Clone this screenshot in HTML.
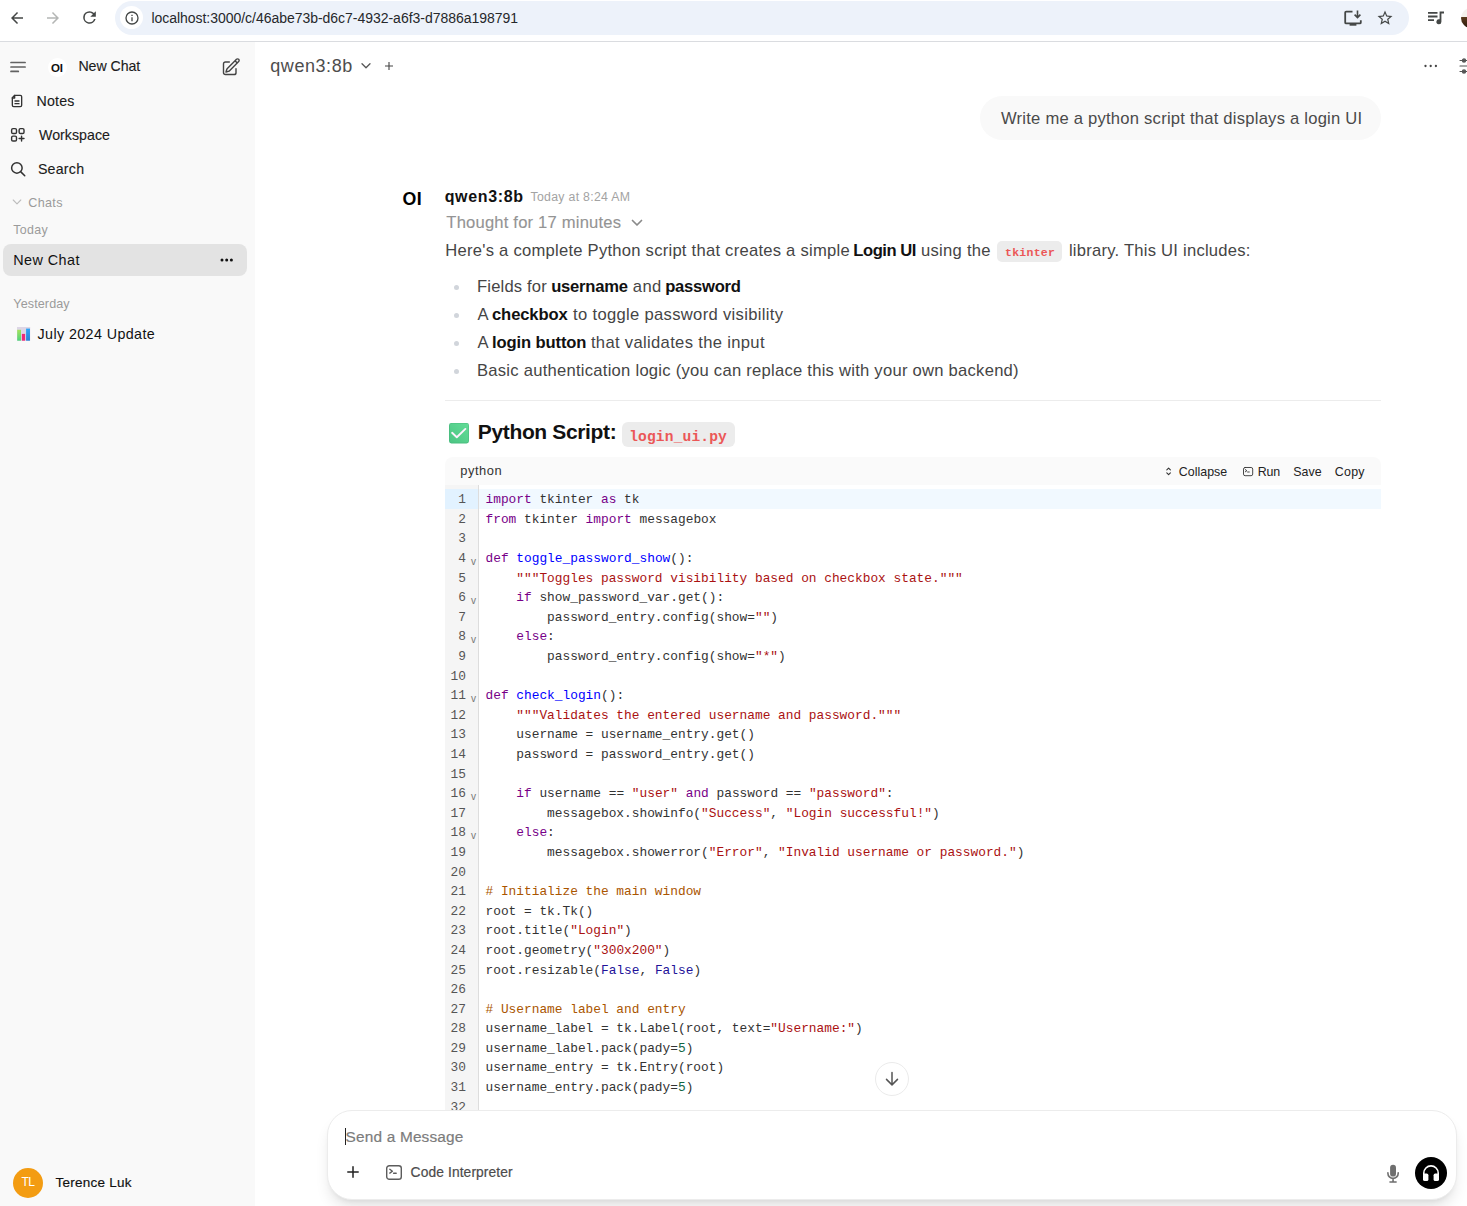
<!DOCTYPE html>
<html lang="en">
<head>
<meta charset="utf-8">
<title>New Chat | Open WebUI</title>
<style>
*{box-sizing:border-box;margin:0;padding:0}
html,body{width:1467px;height:1206px;overflow:hidden;background:#fff}
body{font-family:"Liberation Sans",sans-serif;color:#1f1f1f;position:relative;font-size:14px}
.abs{position:absolute;white-space:nowrap}
svg{position:absolute;overflow:visible}
/* browser chrome */
#chrome{position:absolute;left:0;top:0;width:1467px;height:42px;background:#fff;border-bottom:1px solid #dadce0}
#omni{position:absolute;left:115px;top:1px;width:1294px;height:34px;border-radius:17px;background:#edf2fa}
#omni .info{position:absolute;left:5px;top:5px;width:23px;height:23px;border-radius:50%;background:#fff}
#url{left:152px;top:9px;font-size:14px;color:#1f1f1f;line-height:18px}
/* sidebar */
#side{position:absolute;left:0;top:42px;width:255px;height:1164px;background:#f9f9f9}
.nav{font-size:14px;color:#171717;line-height:18px;-webkit-text-stroke:.18px #171717}
.muted{font-size:12px;color:#9b9b9b;line-height:16px}
#sel{position:absolute;left:3px;top:244px;width:244px;height:32px;border-radius:9px;background:#e3e3e3}
/* main */
#main{position:absolute;left:255px;top:42px;width:1212px;height:1164px;background:#fff;overflow:hidden}
.t16{font-size:16px;line-height:20px;color:#333}
b{font-weight:700;color:#111}
.ic{display:inline-block;font-family:"Liberation Mono",monospace;font-weight:700;color:#eb5757;background:#ececec;border-radius:5px}
/* code */
#cb{position:absolute;left:445px;top:457px;width:936px;height:760px;background:#fff}
#cbh{position:absolute;left:0;top:0;width:936px;height:28px;background:#fafafa;border-radius:8px 8px 0 0}
#gut{position:absolute;left:0;top:28px;width:34px;height:730px;background:#f5f5f5;border-right:1px solid #ddd}
#act{position:absolute;left:34px;top:32px;width:902px;height:19.6px;background:#f1f9ff}
#actg{position:absolute;left:0;top:32px;width:33px;height:19.6px;background:#e2f2ff}
pre{position:absolute;font-family:"Liberation Mono",monospace;font-size:12.83px;line-height:19.6px;color:#333;white-space:pre}
#ln{left:0;top:33.25px;width:21px;text-align:right;color:#555}
#code{left:40.5px;top:33.25px}
.k{color:#708}.d{color:#00f}.s{color:#a11}.c{color:#a50}.a{color:#219}.n{color:#164}
.fold{position:absolute;left:26px;font-family:"Liberation Sans",sans-serif;font-size:10px;color:#777;line-height:10px}
.hb{font-size:12px;color:#222;line-height:16px}
.dot{position:absolute;left:453.9px;width:5.2px;height:5.2px;border-radius:50%;background:#d1d5db}
/* input */
#inp{position:absolute;left:327px;top:1110px;width:1130px;height:90px;border-radius:25px;background:#fff;border:1px solid #ececec;box-shadow:0 10px 15px -3px rgba(0,0,0,.11),0 4px 6px -4px rgba(0,0,0,.1)}
#fadeb{position:absolute;left:255px;top:1110px;width:1212px;height:96px;background:#fff}
</style>
</head>
<body>
<div id="side">
<svg style="left:0;top:0" width="40" height="40" viewBox="0 0 40 40" fill="none" stroke="#626262" stroke-width="1.700" stroke-linecap="round"><path d="M11 20.500h14.100M11 25h14.100M11 29.400h7.300"/></svg>
<div style="position:absolute;left:47.5px;top:15.5px;width:19px;height:19px;border-radius:50%;background:#fff"></div>
<svg style="left:221px;top:14.7px" width="20" height="20" viewBox="0 0 24 24" fill="none" stroke="#444" stroke-width="1.7" stroke-linecap="round" stroke-linejoin="round"><path d="M16.862 4.487l1.687-1.688a1.875 1.875 0 112.652 2.652L10.582 16.07a4.5 4.5 0 01-1.897 1.13L6 18l.8-2.685a4.5 4.5 0 011.13-1.897l8.932-8.931zm0 0L19.5 7.125M18 14v4.75A2.25 2.25 0 0115.75 21H5.25A2.25 2.25 0 013 18.750V8.250A2.250 2.250 0 015.250 6H10"/></svg>
<svg style="left:9px;top:51px" width="16" height="16" viewBox="0 0 24 24" fill="none" stroke="#333" stroke-width="2" stroke-linecap="round" stroke-linejoin="round"><path d="M8.5 3.5H17a2 2 0 0 1 2 2v13a2 2 0 0 1-2 2H7a2 2 0 0 1-2-2V7z"/><path d="M5 7.5h3.5v-4"/><path d="M9 12h6M9 16h6"/></svg>
<svg style="left:9px;top:84px" width="18" height="18" viewBox="0 0 24 24" fill="none" stroke="#333" stroke-width="1.9" stroke-linecap="round" stroke-linejoin="round"><rect x="3.5" y="3.5" width="6.5" height="6.5" rx="1.8"/><rect x="13.5" y="3.5" width="6.5" height="6.5" rx="1.8"/><rect x="3.5" y="13.5" width="6.5" height="6.5" rx="1.8"/><path d="M16.75 13.5v6.5M13.5 16.75h6.500"/></svg>
<svg style="left:9px;top:118px" width="18" height="18" viewBox="0 0 24 24" fill="none" stroke="#333" stroke-width="2" stroke-linecap="round"><circle cx="10.500" cy="10.500" r="7"/><path d="M15.800 15.800L21 21"/></svg>
<svg style="left:12px;top:155px" width="10" height="10" viewBox="0 0 10 10" fill="none" stroke="#bdbdbd" stroke-width="1.100" stroke-linecap="round" stroke-linejoin="round"><path d="M1.200 3l3.800 3.800L8.800 3"/></svg>
<div id="selx" style="position:absolute;left:3px;top:202px;width:244px;height:32px;border-radius:8px;background:#e3e3e3"></div>
<svg style="left:220px;top:216px" width="14" height="4" viewBox="0 0 14 4"><circle cx="2" cy="2" r="1.500" fill="#111"/><circle cx="6.700" cy="2" r="1.500" fill="#111"/><circle cx="11.400" cy="2" r="1.500" fill="#111"/></svg>
<svg style="left:17px;top:285.2px" width="13.200" height="13.700" viewBox="0 0 13.200 13.700"><defs><linearGradient id="g2" x1="0" y1="0" x2="0" y2="1"><stop offset="0" stop-color="#a6e45c"/><stop offset="1" stop-color="#4fd47a"/></linearGradient><linearGradient id="g3" x1="0" y1="0" x2="0" y2="1"><stop offset="0" stop-color="#2ea6f8"/><stop offset="1" stop-color="#2b7fd6"/></linearGradient></defs><rect x="0" y="0" width="13.200" height="13.700" fill="#ddd6e6"/><rect x=".2" y="2.800" width="3.800" height="10.900" fill="url(#g2)"/><rect x="4.900" y="6.900" width="3.200" height="6.800" fill="#ee2a78"/><rect x="9.100" y="1.600" width="3.900" height="12.100" fill="url(#g3)"/></svg>
<div style="position:absolute;left:13px;top:1126px;width:30px;height:30px;border-radius:50%;background:#f39c12"></div>
</div>
<div id="main">
<svg style="left:106px;top:20px" width="10" height="8" viewBox="0 0 10 8" fill="none" stroke="#555" stroke-width="1.300" stroke-linecap="round" stroke-linejoin="round"><path d="M1 1.800l4 4 4-4"/></svg>
<svg style="left:130px;top:20px" width="8" height="8" viewBox="0 0 8 8" fill="none" stroke="#444" stroke-width="1.100"><path d="M4 0v8M0 4h8"/></svg>
<svg style="left:1169px;top:22px" width="14" height="4" viewBox="0 0 14 4"><circle cx="1.500" cy="2" r="1.150" fill="#444"/><circle cx="6.700" cy="2" r="1.150" fill="#444"/><circle cx="11.900" cy="2" r="1.150" fill="#444"/></svg>
<svg style="left:1204px;top:16px" width="16" height="16" viewBox="0 0 16 16" fill="none" stroke="#555" stroke-width="1.200" stroke-linecap="round"><path d="M1 2.500h2M7 2.500h8M1 8h8M13 8h2M1 13.500h2M7 13.500h8"/><circle cx="5" cy="2.500" r="1.600" fill="#555"/><circle cx="11" cy="8" r="1.600" fill="#555"/><circle cx="5" cy="13.500" r="1.600" fill="#555"/></svg>
</div>
<div style="position:absolute;left:980px;top:96px;width:401px;height:44px;border-radius:22px;background:#f9f9f9"></div>
<svg style="left:631px;top:218px" width="12" height="10" viewBox="0 0 12 10" fill="none" stroke="#8a8a8a" stroke-width="1.700" stroke-linecap="round" stroke-linejoin="round"><path d="M1.500 2.500l4.500 4.500 4.500-4.500"/></svg>
<div style="position:absolute;left:997.2px;top:241px;width:64.7px;height:20.5px;border-radius:5px;background:#ececec"></div>
<div class="dot" style="top:284.9px"></div><div class="dot" style="top:312.9px"></div><div class="dot" style="top:340.9px"></div><div class="dot" style="top:368.9px"></div><div style="position:absolute;left:445px;top:400px;width:936px;height:1px;background:#ececec"></div>
<svg style="left:449px;top:422.8px" width="20" height="20.400" viewBox="0 0 20 20.400"><defs><linearGradient id="g1" x1="0" y1="1" x2="1" y2="0"><stop offset="0" stop-color="#4cc583"/><stop offset="1" stop-color="#62dc97"/></linearGradient></defs><rect x="0" y="0" width="20" height="20.400" rx="2.400" fill="#49bd7f"/><rect x=".9" y=".6" width="18.500" height="18.900" rx="1.900" fill="url(#g1)"/><path d="M3.100 9.800l4.700 4.500 8.600-8.400" fill="none" stroke="#fdf2fd" stroke-width="1.900" stroke-linecap="round" stroke-linejoin="round"/></svg>
<div style="position:absolute;left:622px;top:422.4px;width:112.5px;height:24.9px;border-radius:6px;background:#ececec"></div>
<div id="cb">
<div id="cbh"></div>
<div id="gut"></div>
<div id="act"></div><div id="actg"></div>
<svg style="left:721.4px;top:10.2px" width="5.200" height="8.700" viewBox="0 0 5.200 8.700" fill="none" stroke="#333" stroke-width="1.100" stroke-linecap="round" stroke-linejoin="round"><path d="M.8 2.900L2.600 1.100l1.800 1.800M.8 5.800l1.800 1.800 1.800-1.800"/></svg>
<svg style="left:798px;top:10.200px" width="10.200" height="9.200" viewBox="0 0 10.200 9.200" fill="none" stroke="#333" stroke-width=".9" stroke-linecap="round" stroke-linejoin="round"><rect x=".5" y=".5" width="9.200" height="8.200" rx="1.600"/><path d="M2.300 2.600l1.600 1.100-1.600 1.100M4.600 5h1.700"/></svg>
<pre id="ln">1
2
3
4
5
6
7
8
9
10
11
12
13
14
15
16
17
18
19
20
21
22
23
24
25
26
27
28
29
30
31
32</pre>
<div class="fold" style="top:99.5px">v</div><div class="fold" style="top:138.7px">v</div><div class="fold" style="top:177.9px">v</div><div class="fold" style="top:236.7px">v</div><div class="fold" style="top:334.7px">v</div><div class="fold" style="top:373.9px">v</div>
<pre id="code"><span class="k">import</span> tkinter <span class="k">as</span> tk
<span class="k">from</span> tkinter <span class="k">import</span> messagebox

<span class="k">def</span> <span class="d">toggle_password_show</span>():
    <span class="s">"""Toggles password visibility based on checkbox state."""</span>
    <span class="k">if</span> show_password_var.get():
        password_entry.config(show=<span class="s">""</span>)
    <span class="k">else</span>:
        password_entry.config(show=<span class="s">"*"</span>)

<span class="k">def</span> <span class="d">check_login</span>():
    <span class="s">"""Validates the entered username and password."""</span>
    username = username_entry.get()
    password = password_entry.get()

    <span class="k">if</span> username == <span class="s">"user"</span> <span class="k">and</span> password == <span class="s">"password"</span>:
        messagebox.showinfo(<span class="s">"Success"</span>, <span class="s">"Login successful!"</span>)
    <span class="k">else</span>:
        messagebox.showerror(<span class="s">"Error"</span>, <span class="s">"Invalid username or password."</span>)

<span class="c"># Initialize the main window</span>
root = tk.Tk()
root.title(<span class="s">"Login"</span>)
root.geometry(<span class="s">"300x200"</span>)
root.resizable(<span class="a">False</span>, <span class="a">False</span>)

<span class="c"># Username label and entry</span>
username_label = tk.Label(root, text=<span class="s">"Username:"</span>)
username_label.pack(pady=<span class="n">5</span>)
username_entry = tk.Entry(root)
username_entry.pack(pady=<span class="n">5</span>)
</pre>
</div>
<div style="position:absolute;left:875px;top:1062px;width:34px;height:34px;border-radius:50%;background:#fff;border:1px solid #ebebeb"></div>
<svg style="left:882px;top:1069px" width="20" height="20" viewBox="0 0 20 20" fill="none" stroke="#555" stroke-width="1.500" stroke-linecap="round" stroke-linejoin="round"><path d="M10 3.600v12.200M4.500 10.400l5.500 5.500 5.500-5.500"/></svg>
<div id="fadeb"></div>
<div id="inp"></div>
<div style="position:absolute;left:345px;top:1128px;width:1px;height:17px;background:#222"></div>
<svg style="left:347px;top:1166px" width="12" height="12" viewBox="0 0 12 12" fill="none" stroke="#222" stroke-width="1.500" stroke-linecap="round"><path d="M6 .8v10.400M.8 6h10.400"/></svg>
<svg style="left:385.500px;top:1164.500px" width="16" height="15" viewBox="0 0 16 15" fill="none" stroke="#5c5c5c" stroke-width="1.400" stroke-linecap="round" stroke-linejoin="round"><rect x=".7" y=".7" width="14.600" height="13.600" rx="2.600"/><path d="M3.800 4.300l2.600 1.900-2.600 1.900M7.600 8.300h2.600"/></svg>
<svg style="left:1386px;top:1163.5px" width="14" height="20" viewBox="0 0 14 20"><rect x="4.1" y=".8" width="5.9" height="11.8" rx="2.95" fill="#6e6e6e"/><path d="M1.9 8.800v.4a5.150 5.150 0 0 0 10.300 0v-.4M7.050 14.500v3.500M4 18h6.100" fill="none" stroke="#6e6e6e" stroke-width="1.600" stroke-linecap="round"/></svg>
<div style="position:absolute;left:1414.500px;top:1157px;width:32px;height:32px;border-radius:50%;background:#000"></div>
<svg style="left:1421px;top:1162.9px" width="20" height="20" viewBox="0 0 20 20"><path d="M2.800 12V10.100a7.200 7.200 0 0 1 14.400 0V12" fill="none" stroke="#fff" stroke-width="1.600"/><rect x="2" y="10.500" width="5.400" height="7.600" rx="1.700" fill="#fff"/><rect x="12.600" y="10.500" width="5.400" height="7.600" rx="1.700" fill="#fff"/></svg>

<div id="chrome"><div id="omni"><div class="info"></div></div>
<svg style="left:8px;top:8.7px" width="18" height="18" viewBox="0 0 24 24"><path d="M20 11H7.83l5.59-5.59L12 4l-8 8 8 8 1.41-1.41L7.83 13H20z" fill="#444746"/></svg>
<svg style="left:43.5px;top:8.7px" width="18" height="18" viewBox="0 0 24 24"><path d="M12 4l-1.41 1.41L16.17 11H4v2h12.17l-5.58 5.59L12 20l8-8z" fill="#b4b6b5"/></svg>
<svg style="left:79.8px;top:8.4px" width="19" height="19" viewBox="0 0 24 24"><path d="M17.65 6.35A7.96 7.96 0 0 0 12 4a8 8 0 1 0 7.73 10h-2.08A6 6 0 1 1 12 6c1.66 0 3.14.69 4.22 1.78L13 11h7V4z" fill="#444746"/></svg>
<svg style="left:124px;top:10px" width="16" height="16" viewBox="0 0 24 24"><path d="M11 7h2v2h-2zm0 4h2v6h-2zm1-9a10 10 0 1 0 0 20 10 10 0 0 0 0-20zm0 18a8 8 0 1 1 0-16 8 8 0 0 1 0 16z" fill="#444746"/></svg>
<svg style="left:1343px;top:9px" width="19" height="18" viewBox="0 0 19 18" fill="none" stroke="#444746" stroke-width="1.8"><path d="M9.5 2.6H3.2a1 1 0 0 0-1 1v9.8a1 1 0 0 0 1 1h13.6a1 1 0 0 0 1-1v-2.2"/><path d="M6.6 15.6h6.8" stroke-width="2.2"/><path d="M14.5 1.6v6.6M11.6 5.6l2.9 2.9 2.9-2.9" stroke-width="1.6"/></svg>
<svg style="left:1376px;top:9px" width="18" height="18" viewBox="0 0 24 24"><path d="M22 9.24l-7.19-.62L12 2 9.19 8.63 2 9.24l5.46 4.73L5.82 21 12 17.27 18.18 21l-1.63-7.03zM12 15.4l-3.76 2.27 1-4.28-3.32-2.88 4.38-.38L12 6.1l1.71 4.04 4.38.38-3.32 2.88 1 4.28z" fill="#444746"/></svg>
<svg style="left:1426px;top:9px" width="19" height="18" viewBox="0 0 19 18"><path d="M2 3h9.5v1.8H2zM2 6.6h9.5v1.8H2zM2 10.2h6v1.8H2z" fill="#444746"/><path d="M13.6 2.6H18v1.9h-2.6v8.2a2.5 2.5 0 1 1-1.8-2.4z" fill="#444746"/></svg>
<div style="position:absolute;left:1461px;top:8px;width:20px;height:20px;border-radius:50%;background:linear-gradient(#f4f1ec 0,#f4f1ec 45%,#5a3a1c 46%,#2a1a0c 100%)"></div>
</div>
<div class="abs" style="left:1001.00px;top:108.00px;font-size:16.6px;line-height:21px;color:#4a4a4a;letter-spacing:0.229px">Write me a python script that displays a login UI</div>
<div class="abs" style="left:444.70px;top:187.30px;font-size:16px;line-height:20px;color:#111;font-weight:700;letter-spacing:0.643px">qwen3:8b</div>
<div class="abs" style="left:530.50px;top:190.20px;font-size:12.3px;line-height:15px;color:#a3a3a3;letter-spacing:0.300px">Today at 8:24 AM</div>
<div class="abs" style="left:446.30px;top:211.80px;font-size:16.6px;line-height:21px;color:#949494;letter-spacing:0.195px;-webkit-text-stroke:0.12px #949494">Thought for 17 minutes</div>
<div class="abs" style="left:445.30px;top:240.40px;font-size:16.6px;line-height:21px;color:#454545;letter-spacing:0.248px">Here's a complete Python script that creates a simple</div>
<div class="abs" style="left:853.30px;top:240.40px;font-size:16.6px;line-height:21px;color:#111;font-weight:700;letter-spacing:-0.457px">Login UI</div>
<div class="abs" style="left:920.90px;top:240.40px;font-size:16.6px;line-height:21px;color:#454545;letter-spacing:0.288px">using the</div>
<div class="abs" style="left:1005.00px;top:245.70px;font-size:11.5px;line-height:14px;color:#eb5757;font-weight:700;font-family:'Liberation Mono',monospace;letter-spacing:0.267px">tkinter</div>
<div class="abs" style="left:1068.90px;top:240.40px;font-size:16.6px;line-height:21px;color:#454545;letter-spacing:0.240px">library. This UI includes:</div>
<div class="abs" style="left:477.00px;top:275.90px;font-size:16.6px;line-height:21px;color:#454545;letter-spacing:0.167px">Fields for</div>
<div class="abs" style="left:551.20px;top:275.90px;font-size:16.6px;line-height:21px;color:#111;font-weight:700;letter-spacing:-0.229px">username</div>
<div class="abs" style="left:632.80px;top:275.90px;font-size:16.6px;line-height:21px;color:#454545;letter-spacing:0.400px">and</div>
<div class="abs" style="left:665.20px;top:275.90px;font-size:16.6px;line-height:21px;color:#111;font-weight:700;letter-spacing:-0.257px">password</div>
<div class="abs" style="left:477.40px;top:303.90px;font-size:16.6px;line-height:21px;color:#454545">A</div>
<div class="abs" style="left:492.00px;top:303.90px;font-size:16.6px;line-height:21px;color:#111;font-weight:700;letter-spacing:-0.114px">checkbox</div>
<div class="abs" style="left:573.10px;top:303.90px;font-size:16.6px;line-height:21px;color:#454545;letter-spacing:0.314px">to toggle password visibility</div>
<div class="abs" style="left:477.40px;top:331.90px;font-size:16.6px;line-height:21px;color:#454545">A</div>
<div class="abs" style="left:492.00px;top:331.90px;font-size:16.6px;line-height:21px;color:#111;font-weight:700;letter-spacing:-0.127px">login button</div>
<div class="abs" style="left:590.90px;top:331.90px;font-size:16.6px;line-height:21px;color:#454545;letter-spacing:0.330px">that validates the input</div>
<div class="abs" style="left:477.00px;top:359.90px;font-size:16.6px;line-height:21px;color:#454545;letter-spacing:0.253px">Basic authentication logic (you can replace this with your own backend)</div>
<div class="abs" style="left:477.80px;top:419.30px;font-size:21px;line-height:26px;color:#111;font-weight:700;letter-spacing:-0.354px">Python Script:</div>
<div class="abs" style="left:629.20px;top:427.80px;font-size:14.6px;line-height:18px;color:#eb5757;font-weight:700;font-family:'Liberation Mono',monospace;letter-spacing:0.130px">login_ui.py</div>
<div class="abs" style="left:460.30px;top:462.50px;font-size:12.9px;line-height:16px;color:#333;letter-spacing:0.540px">python</div>
<div class="abs" style="left:1178.80px;top:463.90px;font-size:12.4px;line-height:16px;color:#222;letter-spacing:0.029px">Collapse</div>
<div class="abs" style="left:1257.80px;top:463.90px;font-size:12.4px;line-height:16px;color:#222;letter-spacing:-0.250px">Run</div>
<div class="abs" style="left:1293.30px;top:463.90px;font-size:12.4px;line-height:16px;color:#222;letter-spacing:0.033px">Save</div>
<div class="abs" style="left:1334.80px;top:463.90px;font-size:12.4px;line-height:16px;color:#222;letter-spacing:0.267px">Copy</div>
<div class="abs" style="left:345.60px;top:1126.90px;font-size:15.4px;line-height:19px;color:#7c7c7c;letter-spacing:0.177px;-webkit-text-stroke:0.2px #7c7c7c">Send a Message</div>
<div class="abs" style="left:410.60px;top:1164.10px;font-size:13.8px;line-height:17px;color:#4c4c4c;letter-spacing:0.107px;-webkit-text-stroke:0.2px #4c4c4c">Code Interpreter</div>
<div class="abs" style="left:402.50px;top:188.20px;font-size:17.8px;line-height:22px;color:#000;font-weight:700;letter-spacing:0.500px">OI</div>
<div class="abs" style="left:51.00px;top:60.50px;font-size:11.5px;line-height:14px;color:#111;font-weight:700;letter-spacing:-0.100px">OI</div>
<div class="abs" style="left:78.40px;top:57.40px;font-size:14.2px;line-height:18px;color:#1c1c1c;letter-spacing:-0.057px;-webkit-text-stroke:0.12px #1c1c1c">New Chat</div>
<div class="abs" style="left:36.60px;top:92.00px;font-size:14.2px;line-height:18px;color:#1c1c1c;letter-spacing:0.175px;-webkit-text-stroke:0.12px #1c1c1c">Notes</div>
<div class="abs" style="left:39.00px;top:126.20px;font-size:14.2px;line-height:18px;color:#1c1c1c;letter-spacing:0.025px;-webkit-text-stroke:0.12px #1c1c1c">Workspace</div>
<div class="abs" style="left:37.90px;top:159.80px;font-size:14.2px;line-height:18px;color:#1c1c1c;letter-spacing:0.240px;-webkit-text-stroke:0.12px #1c1c1c">Search</div>
<div class="abs" style="left:28.30px;top:194.90px;font-size:12.6px;line-height:16px;color:#9b9b9b;letter-spacing:0.325px">Chats</div>
<div class="abs" style="left:13.30px;top:221.80px;font-size:12.4px;line-height:16px;color:#9b9b9b;letter-spacing:0.325px">Today</div>
<div class="abs" style="left:13.25px;top:251.00px;font-size:14.4px;line-height:18px;color:#111;letter-spacing:0.429px">New Chat</div>
<div class="abs" style="left:13.30px;top:295.90px;font-size:12.6px;line-height:16px;color:#9b9b9b;letter-spacing:0.100px">Yesterday</div>
<div class="abs" style="left:37.50px;top:324.80px;font-size:14.3px;line-height:18px;color:#111;letter-spacing:0.400px">July 2024 Update</div>
<div class="abs" style="left:55.60px;top:1173.50px;font-size:13.5px;line-height:17px;color:#111;letter-spacing:0.240px;-webkit-text-stroke:0.18px #111">Terence Luk</div>
<div class="abs" style="left:151.40px;top:8.80px;font-size:14px;line-height:18px;color:#26282b;letter-spacing:-0.031px">localhost:3000/c/46abe73b-d6c7-4932-a6f3-d7886a198791</div>
<div class="abs" style="left:270.30px;top:54.80px;font-size:18px;line-height:22px;color:#4d4d4d;letter-spacing:0.557px">qwen3:8b</div>
<div class="abs" style="left:21.50px;top:1174.70px;font-size:12px;line-height:15px;color:#fff;letter-spacing:-0.700px">TL</div>
</body>
</html>
